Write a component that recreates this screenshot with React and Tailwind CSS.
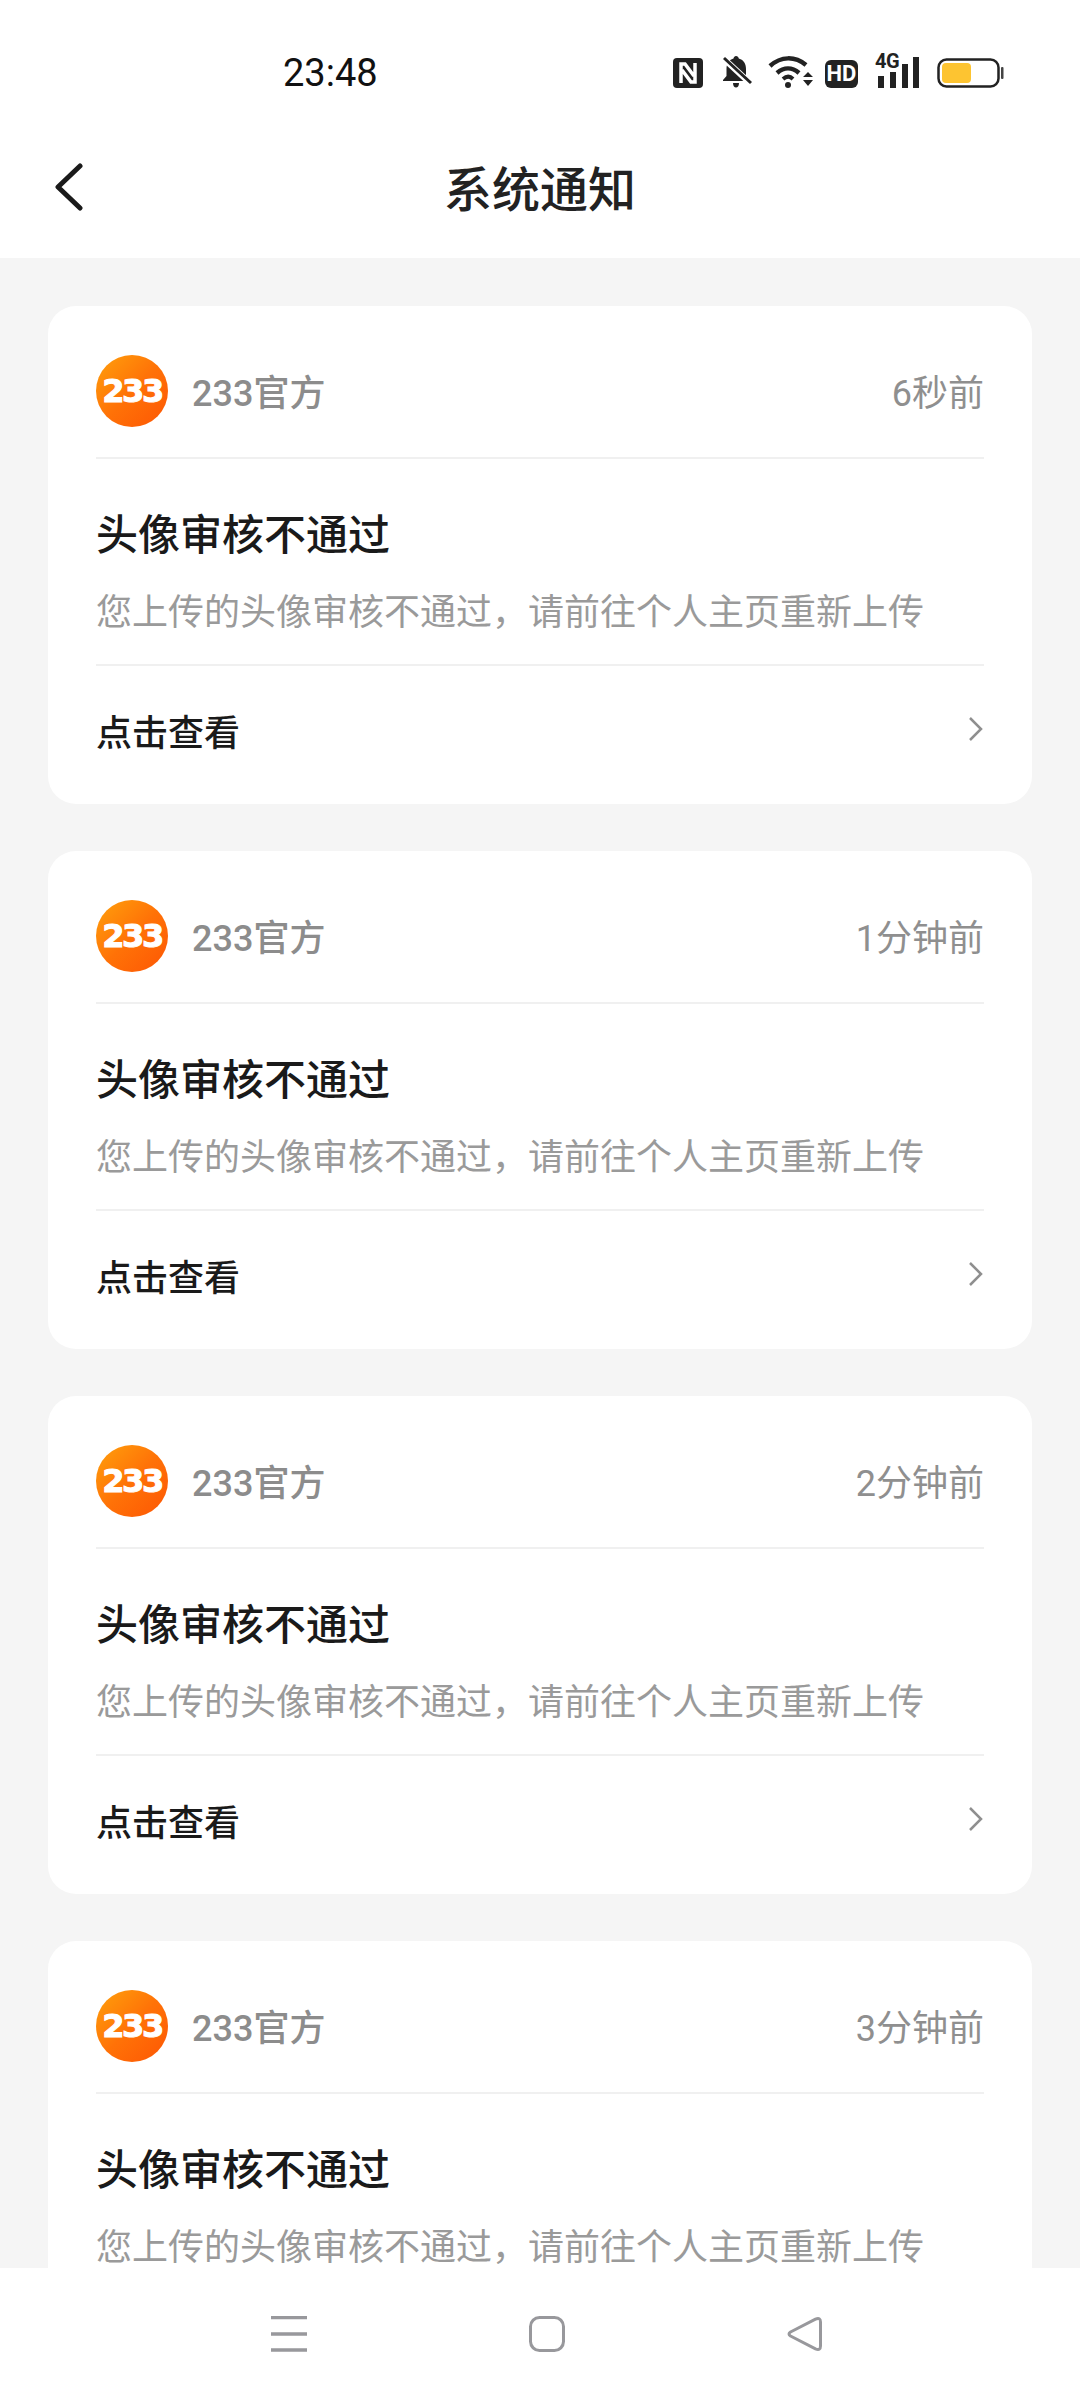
const FONT = "font-['Roboto','Noto_Sans_CJK_SC',sans-serif]";

function StatusIcons() {
  return (
    <div className="flex items-end h-[33px] mb-[3px]">
      <svg width="30" height="30" viewBox="0 0 30 30" className="mr-[18px]">
        <rect width="30" height="30" rx="4" fill="#222" />
        <path d="M8 25V6h4l9 12M22 5v19h-4L9 12" fill="none" stroke="#fff" strokeWidth="3.500" />
      </svg>
      <svg width="31" height="33" viewBox="0 0 31 33" className="mr-[16px]">
        <path d="M15 1c1.500 0 2.500 1 2.800 2.500C23 5 25 9 25 14v7l4 4v1H2v-1l3.500-4v-7c0-5 2-9 7-10.500C12.800 2 13.700 1 15 1z" fill="#222" />
        <path d="M12 28h6c0 3-1.500 4.500-3 4.500s-3-1.500-3-4.500z" fill="#222" />
        <path d="M2 3l28 26" stroke="#fff" strokeWidth="6" />
        <path d="M3 3l27 25" stroke="#222" strokeWidth="3" />
      </svg>
      <svg width="46" height="33" viewBox="0 0 46 33" className="mr-[11px]">
        <path d="M2 11C13 1 27 1 38 10" fill="none" stroke="#222" strokeWidth="4.500" />
        <path d="M9 18c7-6 15-6 22 0" fill="none" stroke="#222" strokeWidth="4.500" />
        <path d="M15 24c3.500-3 7-3 10 0" fill="none" stroke="#222" strokeWidth="4" />
        <circle cx="20" cy="30" r="3" fill="#222" />
        <path d="M35 22l5-5 5 5zM35 25l5 6 5-6z" fill="#222" />
      </svg>
      <div className="w-[33px] h-[28px] rounded-[6px] bg-[#222] text-white text-[22px] leading-[28px] font-bold text-center mr-[17px] font-['Liberation_Sans_Narrow','Roboto',sans-serif]">HD</div>
      <div className="relative w-[46px] h-[33px] mr-[16px]">
        <span className="absolute left-0 top-[-3px] text-[20px] leading-[18px] font-bold text-[#222] tracking-[-0.5px]">4G</span>
        <svg width="46" height="33" viewBox="0 0 46 33" className="absolute inset-0">
          <rect x="3" y="21" width="6" height="12" fill="#222" />
          <rect x="15" y="17" width="6" height="16" fill="#222" />
          <rect x="27" y="9" width="6" height="24" fill="#222" />
          <rect x="38" y="2" width="6" height="31" fill="#222" />
        </svg>
      </div>
      <svg width="67" height="30" viewBox="0 0 67 30">
        <rect x="1.500" y="1.500" width="60" height="27" rx="8" fill="#fff" stroke="#222" strokeWidth="2.500" />
        <rect x="5" y="5" width="29" height="20" rx="4" fill="#fdc431" />
        <rect x="64" y="9" width="2.500" height="12" rx="1" fill="#444" />
      </svg>
    </div>
  );
}

function Logo() {
  return (
    <div className="w-[72px] h-[72px] rounded-full shrink-0 flex items-center justify-center bg-gradient-to-br from-[#ffa00c] via-[#ff7207] to-[#fd5504]">
      <span className="text-white text-[32px] leading-none font-bold tracking-[-2.5px] font-['DejaVu_Sans',sans-serif] [-webkit-text-stroke:1px_white]">233</span>
    </div>
  );
}

function Card({ time }) {
  return (
    <div className="bg-white rounded-[28px] px-[48px] shrink-0">
      <div className="flex items-center pt-[49px] pb-[30px] border-b-2 border-[#f0f0f0]">
        <Logo />
        <span className="ml-[24px] mt-[6px] text-[36px] leading-[66px] font-medium text-[#8c8c8c]">233官方</span>
        <span className="ml-auto mt-[6px] text-[36px] leading-[66px] text-[#8f8f8f]">{time}</span>
      </div>
      <div className="pt-[49px] pb-[27px] border-b-2 border-[#f0f0f0]">
        <div className="text-[42px] leading-[56px] font-medium text-[#1a1a1a]">头像审核不通过</div>
        <div className="mt-[25px] text-[36px] leading-[48px] text-[#9a9a9a]">您上传的头像审核不通过，请前往个人主页重新上传</div>
      </div>
      <div className="flex items-center justify-between pt-[44px] pb-[46px]">
        <span className="text-[36px] leading-[48px] font-medium text-[#1a1a1a]">点击查看</span>
        <svg width="16" height="26" viewBox="0 0 16 26" className="mb-[10px]">
          <path d="M2 2l11 11L2 24" fill="none" stroke="#8f8f8f" strokeWidth="2.500" />
        </svg>
      </div>
    </div>
  );
}

export default function App() {
  return (
    <div className={`w-[1080px] h-[2400px] flex flex-col overflow-hidden bg-[#f5f5f5] ${FONT}`}>
      <div className="bg-white h-[258px] shrink-0 flex flex-col">
        <div className="h-[116px] shrink-0 flex items-center justify-between pl-[283px] pr-[76px] pt-[48px] pb-[18px]">
          <span className="text-[38px] leading-[40px] font-normal text-[#111]">23:48</span>
          <StatusIcons />
        </div>
        <div className="relative flex-1 flex items-center justify-center pt-[7px]">
          <svg width="30" height="48" viewBox="0 0 30 48" className="absolute left-[54px] top-[47px]">
            <path d="M26 3L4 24l22 21" fill="none" stroke="#1a1a1a" strokeWidth="5" strokeLinecap="round" strokeLinejoin="round" />
          </svg>
          <span className="text-[48px] leading-[60px] font-medium text-[#222]">系统通知</span>
        </div>
      </div>
      <div className="flex-1 min-h-0 overflow-hidden flex flex-col gap-[47px] pt-[48px] px-[48px]">
        <Card time="6秒前" />
        <Card time="1分钟前" />
        <Card time="2分钟前" />
        <Card time="3分钟前" />
      </div>
      <div className="h-[132px] shrink-0 bg-white flex items-start pl-[271px] pt-[48px]">
        <div className="w-[552px] flex items-center justify-between">
          <svg width="36" height="36" viewBox="0 0 36 36">
            <path d="M0 1.500h36M0 18h36M0 34h36" stroke="#98989c" strokeWidth="3.500" />
          </svg>
          <svg width="36" height="36" viewBox="0 0 36 36">
            <rect x="1.500" y="1.500" width="33" height="33" rx="9" fill="none" stroke="#98989c" strokeWidth="3" />
          </svg>
          <svg width="36" height="36" viewBox="0 0 36 36">
            <path d="M28.500 3.200Q33.500 1 33.500 6V30Q33.500 35 28.500 32.800L3.500 20Q0.500 18 3.500 16Z" fill="none" stroke="#98989c" strokeWidth="3" strokeLinejoin="round" />
          </svg>
        </div>
      </div>
    </div>
  );
}
